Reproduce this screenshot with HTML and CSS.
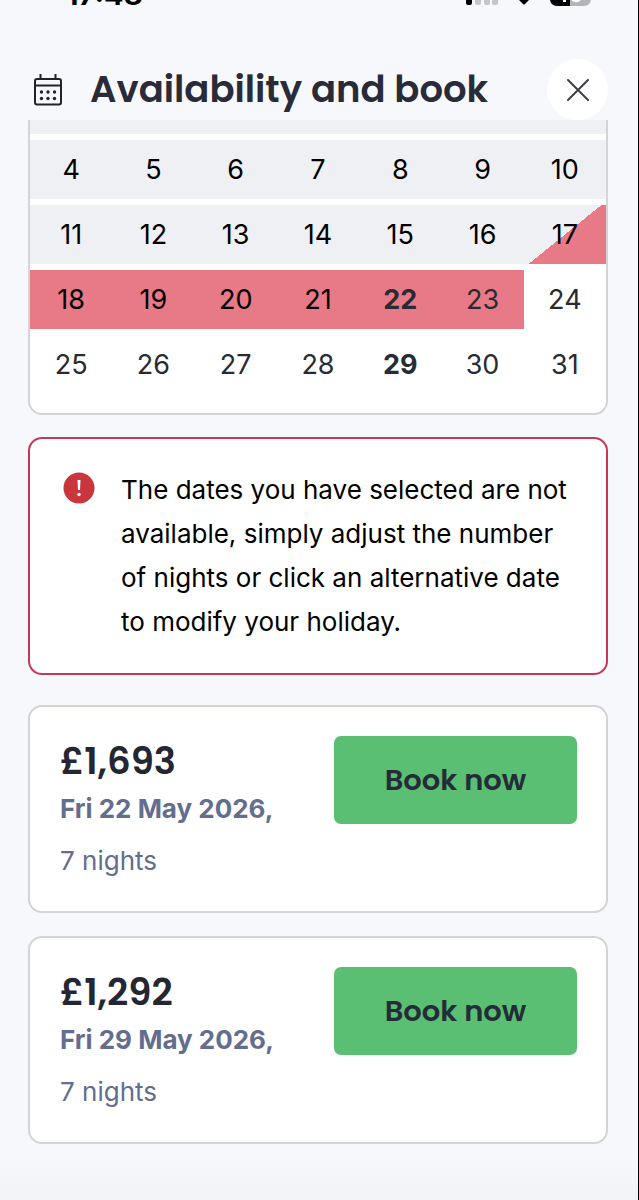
FILE: index.html
```html
<!DOCTYPE html>
<html lang="en">
<head>
<meta charset="utf-8">
<meta name="viewport" content="width=device-width, initial-scale=1">
<title>Availability and book</title>
<link rel="stylesheet" href="styles.css">
</head>
<body>
<div class="page">
  <div class="status">
    <span class="status-time">17:48</span>
    <svg class="status-icons" width="126" height="6" viewBox="0 0 126 6" aria-hidden="true">
      <path d="M0 0h6v3q0 2-2 2H2Q0 5 0 3z" fill="#000"/>
      <path d="M9 0h6v3q0 2-2 2h-2q-2 0-2-2zM18 0h6v3q0 2-2 2h-2q-2 0-2-2zM26 0h6v3q0 2-2 2h-2q-2 0-2-2z" fill="#c5c6ca"/>
      <path d="M53 0h10l-4 4q-1 1-2 0z" fill="#000"/>
      <path d="M84 0h20v6H92q-7 0-8-6z" fill="#000"/>
      <path d="M104 0h21q-1 6-8 6h-13z" fill="#b4b5b9"/>
      <path d="M97 0h3v2h-3zM106 0h9q-4 4-9 1z" fill="#fff"/>
    </svg>
  </div>

  <header class="header">
    <svg class="header-icon" width="28" height="32" viewBox="0 0 28 32" fill="none" stroke="#222326" stroke-width="2" aria-hidden="true">
      <rect x="1" y="5" width="26" height="25.500" rx="2"/>
      <path d="M1 11.500h26M6.500 0v5M21.500 0v5"/>
      <g fill="#222326" stroke="none">
        <circle cx="7.500" cy="18" r="1.700"/><circle cx="14" cy="18" r="1.700"/><circle cx="20.500" cy="18" r="1.700"/>
        <circle cx="7.500" cy="24.500" r="1.700"/><circle cx="14" cy="24.500" r="1.700"/><circle cx="20.500" cy="24.500" r="1.700"/>
      </g>
    </svg>
    <h1 class="title">Availability and book</h1>
    <button class="close" type="button" aria-label="Close">
      <svg width="22" height="22" viewBox="0 0 22 22" fill="none" stroke="#3f4046" stroke-width="2" stroke-linecap="round" aria-hidden="true"><path d="M1 1l20 20M21 1L1 21"/></svg>
    </button>
  </header>

  <main class="content">
    <div class="calendar">
      <table class="days">
        <tbody>
          <tr class="cut past"><td></td><td></td><td></td><td></td><td></td><td></td><td></td></tr>
          <tr class="past"><td><button type="button">4</button></td><td><button type="button">5</button></td><td><button type="button">6</button></td><td><button type="button">7</button></td><td><button type="button">8</button></td><td><button type="button">9</button></td><td><button type="button">10</button></td></tr>
          <tr class="past"><td><button type="button">11</button></td><td><button type="button">12</button></td><td><button type="button">13</button></td><td><button type="button">14</button></td><td><button type="button">15</button></td><td><button type="button">16</button></td><td class="arrival"><button type="button">17</button></td></tr>
          <tr><td class="taken"><button type="button">18</button></td><td class="taken"><button type="button">19</button></td><td class="taken"><button type="button">20</button></td><td class="taken"><button type="button">21</button></td><td class="taken open start"><button type="button">22</button></td><td class="taken open"><button type="button">23</button></td><td class="open"><button type="button">24</button></td></tr>
          <tr><td class="open"><button type="button">25</button></td><td class="open"><button type="button">26</button></td><td class="open"><button type="button">27</button></td><td class="open"><button type="button">28</button></td><td class="open start"><button type="button">29</button></td><td class="open"><button type="button">30</button></td><td class="open"><button type="button">31</button></td></tr>
        </tbody>
      </table>
    </div>

    <div class="alert" role="alert">
      <svg class="alert-icon" width="32" height="32" viewBox="0 0 32 32" aria-hidden="true">
        <circle cx="16" cy="16" r="15.500" fill="#c9373d"/>
        <path d="M14.500 8h3l-.5 10h-2z" fill="#fff"/>
        <circle cx="16" cy="22.500" r="1.700" fill="#fff"/>
      </svg>
      <p class="alert-text">The dates you have selected are not available, simply adjust the number of nights or click an alternative date to modify your holiday.</p>
    </div>

    <div class="offers">
      <section class="offer">
        <div class="details">
          <h2 class="price">£1,693</h2>
          <p class="date">Fri 22 May 2026,</p>
          <p class="nights">7 nights</p>
        </div>
        <button class="book" type="button">Book now</button>
      </section>
      <section class="offer">
        <div class="details">
          <h2 class="price">£1,292</h2>
          <p class="date">Fri 29 May 2026,</p>
          <p class="nights">7 nights</p>
        </div>
        <button class="book" type="button">Book now</button>
      </section>
    </div>
  </main>
</div>
</body>
</html>
```
FILE: styles.css
```css
* {
  box-sizing: border-box;
}

body {
  margin: 0;
  background: #f7f8fc;
  color: #000;
  font-family: Inter, "Liberation Sans", sans-serif;
  font-size: 26px;
}

h1, h2, p {
  margin: 0;
}

button {
  border: 0;
  padding: 0;
  font: inherit;
  color: inherit;
  cursor: pointer;
}

.page {
  min-height: 100vh;
  padding-bottom: 55px;
  border-right: 1px solid #000;
  background: linear-gradient(to top, #f2f3f6, #f7f8fc 44px);
}

.status {
  display: flex;
  justify-content: space-between;
  align-items: flex-end;
  height: 12px;
  padding: 0 46px 6px 66px;
  overflow: hidden;
}

.status-time {
  font-size: 29px;
  font-weight: 700;
  line-height: 22px;
}

.status-icons {
  display: block;
}

.header {
  display: flex;
  align-items: center;
  padding: 47px 30px 0 34px;
}

.header-icon {
  flex: none;
  margin-right: 28px;
}

.title {
  flex: 1;
  padding-bottom: 2px;
  color: #292b38;
  font-family: Poppins, Inter, sans-serif;
  font-size: 37px;
  font-weight: 600;
  line-height: 56px;
  white-space: nowrap;
}

.close {
  display: flex;
  align-items: center;
  justify-content: center;
  flex: none;
  width: 61px;
  height: 61px;
  border-radius: 50%;
  background: #fff;
}

.content {
  padding: 0 30px 0 28px;
}

.calendar {
  padding-bottom: 13px;
  border: 2px solid #d3d4d6;
  border-top: 0;
  border-radius: 0 0 14px 14px;
  background: #fff;
}

.days {
  width: 100%;
  border-collapse: separate;
  border-spacing: 0;
  table-layout: fixed;
  font-size: 27px;
}

.days td {
  height: 65px;
  padding: 0;
  border-bottom: 6px solid transparent;
  background-clip: padding-box;
}

.days .cut td {
  height: 20px;
}

.past td {
  background-color: #eff0f4;
}

.days button {
  display: block;
  width: 100%;
  height: 59px;
  background: none;
}

.days .taken {
  background-color: #e87987;
}

.days .arrival {
  background-image: linear-gradient(141deg, #eff0f4 50%, #e87987 50%);
}

.open {
  color: #292b34;
}

.start {
  font-weight: 700;
}

.alert {
  display: flex;
  align-items: flex-start;
  gap: 26px;
  margin-top: 22px;
  padding: 29px 27px 29px 33px;
  border: 2px solid #c43a56;
  border-radius: 14px;
  background: #fff;
}

.alert-icon {
  flex: none;
  margin-top: 4px;
}

.alert-text {
  line-height: 44px;
}

.offers {
  display: flex;
  flex-direction: column;
  gap: 23px;
  margin-top: 30px;
}

.offer {
  display: flex;
  align-items: flex-start;
  justify-content: space-between;
  padding: 29px 29px 21px 30px;
  border: 2px solid #d3d4d6;
  border-radius: 14px;
  background: #fff;
}

.price {
  color: #242632;
  font-family: Poppins, Inter, sans-serif;
  font-size: 37px;
  font-weight: 600;
  line-height: 50px;
}

.date {
  color: #636d8e;
  font-weight: 700;
  line-height: 46px;
}

.nights {
  color: #636d8e;
  line-height: 58px;
}

.book {
  width: 243px;
  height: 88px;
  border-radius: 7px;
  background: #5abf73;
  color: #242c38;
  font-family: Poppins, Inter, sans-serif;
  font-size: 29px;
  font-weight: 600;
}
```
